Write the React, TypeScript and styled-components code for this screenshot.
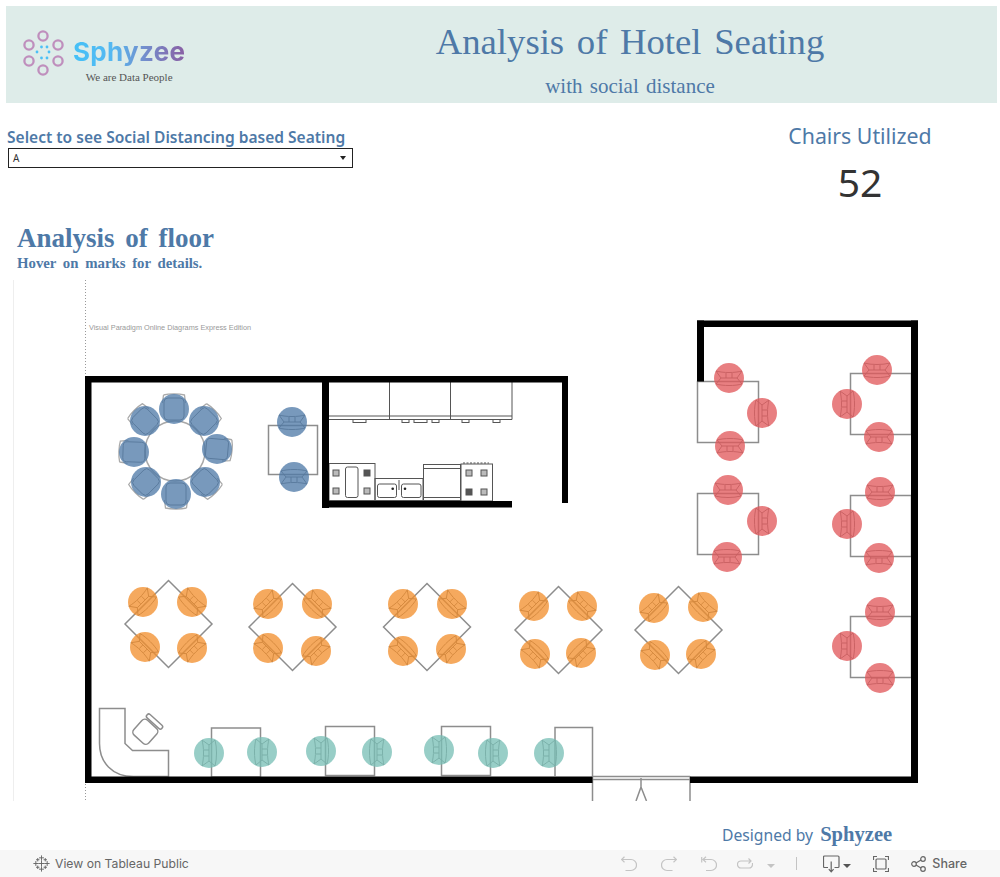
import styled, { createGlobalStyle } from "styled-components";

const GlobalStyle = createGlobalStyle`
  html, body {
    margin: 0;
    padding: 0;
    background: #fff;
  }
`;

const Page = styled.div`
  width: 1000px;
  height: 877px;
  overflow: hidden;
  display: flex;
  flex-direction: column;
  padding-top: 6px;
  box-sizing: border-box;
  font-family: "Noto Sans", sans-serif;
`;

const Banner = styled.header`
  display: flex;
  flex: none;
  height: 97px;
  width: 991px;
  margin-left: 6px;
  background: #deecE9;
`;

const Logo = styled.div`
  width: 257px;
  flex: none;
  display: flex;
  align-items: flex-start;
  gap: 8px;
  padding: 24px 0 0 16px;
  box-sizing: border-box;
`;

const LogoWords = styled.div`
  display: flex;
  flex-direction: column;
  align-items: center;
  padding-top: 7px;
`;

const LogoName = styled.span`
  font-family: Inter, sans-serif;
  font-weight: 700;
  font-size: 26px;
  line-height: 30px;
  letter-spacing: 0.3px;
  background: linear-gradient(90deg, #45c1f7 0%, #55b8f1 35%, #7191cf 62%, #8a5fa4 100%);
  -webkit-background-clip: text;
  background-clip: text;
  color: transparent;
`;

const LogoTag = styled.span`
  font-family: "Liberation Serif", serif;
  font-size: 11px;
  line-height: 14px;
  margin-top: 3px;
  color: #555;
`;

const BannerTitle = styled.div`
  flex: 1;
  display: flex;
  flex-direction: column;
  align-items: center;
  font-family: "Liberation Serif", serif;
  color: #4e79a7;
`;

const MainTitle = styled.h1`
  margin: 13px 0 0;
  font-weight: 400;
  font-size: 36.7px;
  line-height: 46px;
  word-spacing: 3.5px;
`;

const SubTitle = styled.div`
  margin-top: 9px;
  font-size: 21px;
  line-height: 24px;
  word-spacing: 2px;
`;

const Controls = styled.section`
  display: flex;
  justify-content: space-between;
  flex: none;
  height: 95px;
  margin-top: 24px;
`;

const Filter = styled.div`
  padding-left: 7px;
`;

const FilterLabel = styled.div`
  font-weight: 600;
  font-size: 15.55px;
  line-height: 20px;
  color: #4e79a7;
`;

const Dropdown = styled.div`
  display: flex;
  align-items: center;
  justify-content: space-between;
  width: 345px;
  height: 20px;
  margin: 1px 0 0 1px;
  padding: 0 6px 0 4px;
  box-sizing: border-box;
  border: 1px solid #222;
  font-size: 10px;
  color: #333;
`;

const Caret = styled.span<{ $size?: number; $color?: string }>`
  display: inline-block;
  width: 0;
  height: 0;
  border-left: ${(p) => p.$size ?? 3.5}px solid transparent;
  border-right: ${(p) => p.$size ?? 3.5}px solid transparent;
  border-top: ${(p) => (p.$size ?? 3.5) + 0.5}px solid ${(p) => p.$color ?? "#222"};
`;

const Kpi = styled.div`
  width: 280px;
  display: flex;
  flex-direction: column;
  align-items: center;
`;

const KpiLabel = styled.div`
  font-size: 21.3px;
  line-height: 18px;
  color: #4e79a7;
`;

const KpiValue = styled.div`
  margin-top: 12px;
  font-size: 39px;
  line-height: 50px;
  color: #333;
`;

const FloorHeading = styled.section`
  flex: none;
  height: 58px;
  padding-left: 17px;
  font-family: "Liberation Serif", serif;
  font-weight: 700;
  color: #4e79a7;
`;

const FloorTitle = styled.h2`
  margin: 0;
  font-size: 27px;
  line-height: 32px;
  word-spacing: 4px;
`;

const FloorHint = styled.div`
  font-size: 14.8px;
  line-height: 16px;
  margin-top: 1px;
  word-spacing: 3px;
`;

const Plan = styled.svg`
  display: block;
  flex: none;
  width: 1000px;
  height: 521px;
`;

const Wall = styled.rect`
  fill: #000;
`;

const Furniture = styled.g`
  fill: none;
  stroke: #8d8d8d;
  stroke-width: 1.5;
`;

const KitchenLines = styled.g`
  fill: none;
  stroke: #555;
  stroke-width: 1;
`;

const Burner = styled.rect<{ $solid?: boolean }>`
  fill: ${(p) => (p.$solid ? "#555" : "#bbb")};
  stroke: #555;
  stroke-width: 1;
`;

const ChairLines = styled.g`
  fill: none;
  stroke: #777;
  stroke-width: 0.9;
`;

const Mark = styled.circle<{ $fill: string }>`
  fill: ${(p) => p.$fill};
  fill-opacity: 0.76;
`;

const Watermark = styled.text`
  font-family: "Liberation Sans", sans-serif;
  font-size: 7.3px;
  fill: #999;
`;

const Credit = styled.div`
  flex: 1;
  display: flex;
  align-items: baseline;
  padding: 20px 0 0 722px;
  gap: 7px;
  color: #4e79a7;
`;

const CreditText = styled.span`
  font-size: 15.7px;
  line-height: 28px;
`;

const CreditBrand = styled.span`
  font-family: "Liberation Serif", serif;
  font-weight: 700;
  font-size: 20.6px;
`;

const Toolbar = styled.footer`
  flex: none;
  height: 27px;
  display: flex;
  align-items: center;
  justify-content: space-between;
  background: #f7f7f7;
  font-family: Inter, sans-serif;
  color: #666;
`;

const TableauLink = styled.div`
  display: flex;
  align-items: center;
  gap: 5px;
  padding-left: 33px;
  font-size: 12.2px;
`;

const ToolGroup = styled.div`
  display: flex;
  align-items: center;
  padding-right: 33px;
  font-size: 12.5px;
`;

const ToolIcon = styled.svg<{ $gap?: number }>`
  display: block;
  margin-left: ${(p) => p.$gap ?? 0}px;
  fill: none;
  stroke: currentColor;
  stroke-width: 1.2;
`;

const Muted = styled.span`
  display: flex;
  align-items: center;
  color: #c4c4c4;
`;

const Divider = styled.span`
  width: 1px;
  height: 13px;
  margin: 0 26px 0 21px;
  background: #c4c4c4;
`;

const ShareLabel = styled.span`
  margin-left: 6px;
  font-weight: 500;
`;

const BLUE = "#4e79a7";
const RED = "#e15759";
const ORANGE = "#f28e2b";
const TEAL = "#78bfb5";

type Seat = [number, number, number];

const roundSeats: Seat[] = [
  [174, 409, 0],
  [204, 421, 45],
  [217, 449, 95],
  [205, 482, 135],
  [176, 494, 180],
  [146, 482, 225],
  [134, 452, 272],
  [145, 421, 315],
];

const blueSeats: Seat[] = [
  [292, 422, 0],
  [294, 477, 180],
];

const redSeats: Seat[] = [
  [729, 378, 0],
  [762, 413, 90],
  [730, 446, 180],
  [877, 370, 0],
  [847, 404, 270],
  [879, 437, 180],
  [728, 490, 0],
  [762, 521, 90],
  [727, 557, 180],
  [880, 492, 0],
  [847, 524, 270],
  [879, 558, 180],
  [880, 612, 0],
  [847, 646, 270],
  [880, 678, 180],
];

const orangeSeats: Seat[] = [
  [143, 602, 315],
  [192, 602, 45],
  [145, 647, 225],
  [192, 648, 135],
  [268, 604, 315],
  [317, 604, 45],
  [268, 648, 225],
  [316, 651, 135],
  [403, 604, 315],
  [452, 604, 45],
  [403, 651, 225],
  [451, 649, 135],
  [534, 606, 315],
  [582, 606, 45],
  [535, 654, 225],
  [581, 653, 135],
  [654, 608, 315],
  [703, 607, 45],
  [655, 655, 225],
  [701, 654, 135],
];

const tealSeats: Seat[] = [
  [209, 753, 270],
  [262, 752, 90],
  [321, 751, 270],
  [377, 752, 90],
  [439, 750, 270],
  [493, 753, 90],
  [549, 753, 270],
];

const squareTables = [
  [268.5, 425.5],
  [697.5, 381.5],
  [850.5, 373.5],
  [697.5, 493.5],
  [850.5, 495.5],
  [850.5, 616.5],
];

const wideTables = [
  [211.5, 728],
  [325.5, 726.5],
  [441.5, 726.5],
];

const diamonds = [
  [168.5, 624],
  [292.5, 627],
  [427, 627],
  [558.5, 630],
  [678.5, 630],
];

const burners: [number, number, boolean][] = [
  [336, 473, false],
  [336, 491, false],
  [367, 473, true],
  [367, 491, false],
  [469, 473, false],
  [484, 473, false],
  [469, 492, true],
  [484, 492, false],
];

const cabinetHandles = [
  [353, 13],
  [402, 7],
  [414, 13],
  [432, 7],
  [462, 7],
  [493, 7],
];

function TableChair({ x, y, rot }: { x: number; y: number; rot: number }) {
  return (
    <ChairLines transform={`translate(${x} ${y}) rotate(${rot})`}>
      <path d="M-13 -7 C-6 -5 6 -5 13 -7 L8 0 L13 6 C6 8 -6 8 -13 6 L-8 0 Z" />
      <path d="M-8 0 H8 M-3 -5 V0 M3 -5 V0" />
    </ChairLines>
  );
}

function RoundChair({ x, y, rot }: { x: number; y: number; rot: number }) {
  return (
    <ChairLines transform={`translate(${x} ${y}) rotate(${rot})`}>
      <rect x={-10} y={-11} width={20} height={22} rx={4} />
      <path d="M-10.5 -14 C-5 -15.5 5 -15.5 10.5 -14 L11.5 -6 M-10.5 -14 L-11.5 -6" stroke="#aaa" strokeWidth={1.3} />
    </ChairLines>
  );
}

function SeatMarks({ seats, fill }: { seats: Seat[]; fill: string }) {
  return (
    <g>
      {seats.map(([x, y, rot]) => (
        <g key={`${x}-${y}`}>
          <TableChair x={x} y={y} rot={rot} />
          <Mark cx={x} cy={y} r={15} $fill={fill} />
        </g>
      ))}
    </g>
  );
}

function LogoMark() {
  const rings = [
    [21, 6],
    [7, 15],
    [36, 15],
    [7, 31],
    [36, 31],
    [21, 40],
  ];
  const dots = [
    [19.5, 17],
    [25, 17],
    [15, 22],
    [27, 22],
    [19.5, 28],
    [25, 28],
  ];
  return (
    <svg width="43" height="46" viewBox="0 0 43 46">
      {rings.map(([x, y]) => (
        <circle key={`${x}-${y}`} cx={x} cy={y} r={4.6} fill="none" stroke="#bf8fbd" strokeWidth={2.3} />
      ))}
      {dots.map(([x, y]) => (
        <circle key={`${x}-${y}`} cx={x} cy={y} r={1.4} fill="#4cc0f6" />
      ))}
    </svg>
  );
}

function TableauMark() {
  const big = [
    [8, 2, 2.6],
    [2, 8, 2.6],
    [14, 8, 2.6],
    [8, 14, 2.6],
    [8, 8, 3.4],
    [4, 4, 1.8],
    [12, 4, 1.8],
    [4, 12, 1.8],
    [12, 12, 1.8],
  ];
  return (
    <svg width="17" height="17" viewBox="-0.5 -1 17 18" stroke="#666" strokeWidth="1">
      {big.map(([x, y, s]) => (
        <path key={`${x}-${y}`} d={`M${x - s} ${y} H${x + s} M${x} ${y - s} V${y + s}`} />
      ))}
    </svg>
  );
}

export default function App() {
  return (
    <Page>
      <GlobalStyle />
      <Banner>
        <Logo>
          <LogoMark />
          <LogoWords>
            <LogoName>Sphyzee</LogoName>
            <LogoTag>We are Data People</LogoTag>
          </LogoWords>
        </Logo>
        <BannerTitle>
          <MainTitle>Analysis of Hotel Seating</MainTitle>
          <SubTitle>with social distance</SubTitle>
        </BannerTitle>
      </Banner>

      <Controls>
        <Filter>
          <FilterLabel>Select to see Social Distancing based Seating</FilterLabel>
          <Dropdown>
            A
            <Caret />
          </Dropdown>
        </Filter>
        <Kpi>
          <KpiLabel>Chairs Utilized</KpiLabel>
          <KpiValue>52</KpiValue>
        </Kpi>
      </Controls>

      <FloorHeading>
        <FloorTitle>Analysis of floor</FloorTitle>
        <FloorHint>Hover on marks for details.</FloorHint>
      </FloorHeading>

      <Plan viewBox="0 280 1000 521">
        <line x1={13.5} y1={280} x2={13.5} y2={801} stroke="#eee" />
        <line x1={85.5} y1={280} x2={85.5} y2={801} stroke="#999" strokeDasharray="1 2" />
        <Watermark x={89} y={329.5}>
          Visual Paradigm Online Diagrams Express Edition
        </Watermark>

        {/* kitchen */}
        <KitchenLines>
          <path d="M329 416 H512 M329 419.5 H512 M389.5 382 V419.5 M450.5 382 V419.5 M512 382 V419.5" />
          {cabinetHandles.map(([x, w]) => (
            <rect key={x} x={x} y={419.5} width={w} height={3} />
          ))}
          <rect x={329} y={463.5} width={46} height={37} />
          <rect x={345.5} y={467} width={12.5} height={30.5} rx={2} />
          <rect x={375} y={478.5} width={48} height={22} />
          <rect x={377.5} y={484} width={19} height={13.5} rx={2} />
          <rect x={401.5} y={484} width={19.5} height={13.5} rx={2} />
          <rect x={423.5} y={464.5} width={37} height={36} />
          <path d="M423.5 468.5 H460.5 M424 497.5 H460 M399 480 V490" />
          <rect x={461} y={464} width={31.5} height={37} />
          <path d="M463 463 H489" strokeDasharray="2 1.5" />
        </KitchenLines>
        {burners.map(([x, y, solid]) => (
          <Burner key={`${x}-${y}`} x={x - 3} y={y - 3} width={6} height={6} $solid={solid} />
        ))}
        <circle cx={392.7} cy={488.7} r={1.3} fill="#222" />
        <circle cx={405} cy={488.7} r={1.3} fill="#222" />

        {/* tables */}
        <Furniture>
          <circle cx={175} cy={451} r={30} stroke="#a8a8a8" />
          {squareTables.map(([x, y]) => (
            <rect key={`${x}-${y}`} x={x} y={y} width={x === 268.5 ? 49 : 61} height={x === 268.5 ? 49 : 61} />
          ))}
          {wideTables.map(([x, y]) => (
            <rect key={`${x}-${y}`} x={x} y={y} width={49} height={49} />
          ))}
          <path d="M555 776 V727.5 H592.5 V776" />
          {diamonds.map(([x, y]) => (
            <path key={x} d={`M${x} ${y - 43.5} L${x + 43.5} ${y} L${x} ${y + 43.5} L${x - 43.5} ${y} Z`} />
          ))}
          <path d="M99.5 708.5 H125 V743.5 L132.5 750.5 H168.5 V776.5 H133.5 C112 776.5 99.5 762 99.5 743.5 Z" />
          <g transform="translate(146 731) rotate(42)">
            <rect x={-10} y={-9} width={20} height={20} rx={4} />
            <rect x={-10} y={-15} width={20} height={4.5} rx={2} />
          </g>
          <path d="M592.5 776.5 H690 M592.5 779.5 H690 M592.5 776.5 V801 M690 776.5 V801 M641 778 V787 L636 801 M641 787 L646.5 801" />
        </Furniture>

        {/* walls sit over the table edges that touch them */}
        <Wall x={85} y={376} width={483} height={6.5} />
        <Wall x={85} y={376} width={6.5} height={407} />
        <Wall x={85} y={776.5} width={507.5} height={6.5} />
        <Wall x={690} y={776.5} width={228} height={6.5} />
        <Wall x={322} y={376} width={7} height={132} />
        <Wall x={322} y={501} width={190} height={6.5} />
        <Wall x={562} y={376} width={6} height={127} />
        <Wall x={697} y={320.5} width={221} height={6.5} />
        <Wall x={697} y={320.5} width={7} height={61} />
        <Wall x={911} y={320.5} width={7} height={462} />

        {/* seats */}
        {roundSeats.map(([x, y, rot]) => (
          <g key={`${x}-${y}`}>
            <RoundChair x={x} y={y} rot={rot} />
            <Mark cx={x} cy={y} r={15} $fill={BLUE} />
          </g>
        ))}
        <SeatMarks seats={blueSeats} fill={BLUE} />
        <SeatMarks seats={redSeats} fill={RED} />
        <SeatMarks seats={orangeSeats} fill={ORANGE} />
        <SeatMarks seats={tealSeats} fill={TEAL} />
      </Plan>

      <Credit>
        <CreditText>Designed by</CreditText>
        <CreditBrand>Sphyzee</CreditBrand>
      </Credit>

      <Toolbar>
        <TableauLink>
          <TableauMark />
          <span>View on Tableau Public</span>
        </TableauLink>
        <ToolGroup>
          <Muted>
            <ToolIcon width="16" height="16" viewBox="0 0 16 16">
              <path d="M0.5 3.5 H10 A5 5 0 0 1 10 14.5 H4.5 M3.5 0.8 L0.5 3.5 L3.5 6.2" />
            </ToolIcon>
            <ToolIcon width="16" height="16" viewBox="0 0 16 16" $gap={24}>
              <path d="M15.5 3.5 H6 A5 5 0 0 0 6 14.5 H11.5 M12.5 0.8 L15.5 3.5 L12.5 6.2" />
            </ToolIcon>
            <ToolIcon width="16" height="16" viewBox="0 0 16 16" $gap={24}>
              <path d="M0.7 1 V6.5 M2 3.5 H10 A5 5 0 0 1 10 14.5 H5 M5 0.8 L2 3.5 L5 6.2" />
            </ToolIcon>
            <ToolIcon width="16" height="16" viewBox="0 0 16 16" $gap={20}>
              <path d="M14 5 H4 A3.5 3.5 0 0 0 4 12 H12 A3.5 3.5 0 0 0 15.5 8.5 V7 M11.5 2.5 L14 5 L11.5 7.5" />
            </ToolIcon>
            <ToolIcon as="span" $gap={14}>
              <Caret $size={4} $color="#c4c4c4" />
            </ToolIcon>
            <Divider />
          </Muted>
          <ToolIcon width="17" height="18" viewBox="0 0 17 18">
            <path d="M5 12.5 H1.5 A1 1 0 0 1 0.5 11.5 V2 A1 1 0 0 1 1.5 1 H15 A1 1 0 0 1 16 2 V11.5 A1 1 0 0 1 15 12.5 H11.5 M8.2 6.5 V16.5 M5.8 14.2 L8.2 16.8 L10.6 14.2" />
          </ToolIcon>
          <ToolIcon as="span" $gap={3}>
            <Caret $size={4} $color="#555" />
          </ToolIcon>
          <ToolIcon width="16" height="16" viewBox="0 0 16 16" $gap={22}>
            <path d="M0.5 4 V0.5 H4 M12 0.5 H15.5 V4 M15.5 12 V15.5 H12 M4 15.5 H0.5 V12" />
            <rect x={3} y={3} width={10} height={10} rx={1} />
          </ToolIcon>
          <ToolIcon width="15" height="16" viewBox="0 0 15 16" $gap={22}>
            <circle cx={3} cy={8} r={2.3} />
            <circle cx={12} cy={3} r={2.3} />
            <circle cx={12} cy={13} r={2.3} />
            <path d="M5 6.9 L10 4.1 M5 9.1 L10 11.9" />
          </ToolIcon>
          <ShareLabel>Share</ShareLabel>
        </ToolGroup>
      </Toolbar>
    </Page>
  );
}
